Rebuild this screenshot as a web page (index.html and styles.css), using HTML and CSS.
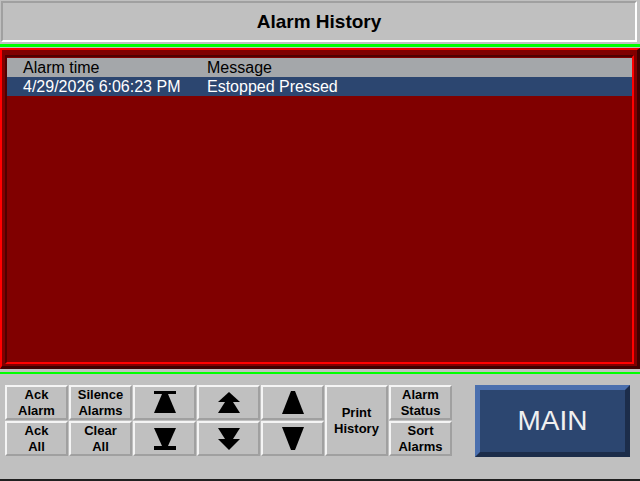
FILE: index.html
```html
<!DOCTYPE html>
<html lang="en">
<head>
    <meta charset="UTF-8">
    <title>Alarm History</title>
    <link rel="stylesheet" href="styles.css">
</head>
<body>
<div class="title">Alarm History</div>
<div class="line top"></div>
<div class="panel">
    <div class="well">
        <table class="alarms">
            <thead>
            <tr><th class="time">Alarm time</th><th>Message</th></tr>
            </thead>
            <tbody>
            <tr class="sel"><td>4/29/2026 6:06:23 PM</td><td>Estopped Pressed</td></tr>
            </tbody>
        </table>
    </div>
</div>
<div class="line bottom"></div>
<div class="controls">
    <div class="keys">
        <div class="key">Ack<br>Alarm</div>
        <div class="key">Silence<br>Alarms</div>
        <div class="key">
            <svg width="22" height="23" viewBox="0 0 22 23"><rect x="0" y="0" width="22" height="3"/><polygon points="8,3 14,3 22,22 0,22"/></svg>
        </div>
        <div class="key">
            <svg width="22" height="22" viewBox="0 0 22 22"><polygon points="11,0 22,10 0,10"/><polygon points="7,10 15,10 22,21 0,21"/></svg>
        </div>
        <div class="key">
            <svg width="22" height="23" viewBox="0 0 22 23"><polygon points="9,0 13,0 22,23 0,23"/></svg>
        </div>
        <div class="key print">Print<br>History</div>
        <div class="key">Alarm<br>Status</div>
        <div class="key">Ack<br>All</div>
        <div class="key">Clear<br>All</div>
        <div class="key">
            <svg width="22" height="22" viewBox="0 0 22 22"><polygon points="0,0 22,0 14,18 8,18"/><rect x="0" y="18" width="22" height="4"/></svg>
        </div>
        <div class="key">
            <svg width="22" height="22" viewBox="0 0 22 22"><polygon points="0,0 22,0 15,11 7,11"/><polygon points="0,11 22,11 11,22"/></svg>
        </div>
        <div class="key">
            <svg width="22" height="23" viewBox="0 0 22 23"><polygon points="0,0 22,0 13,23 9,23"/></svg>
        </div>
        <div class="key">Sort<br>Alarms</div>
    </div>
    <div class="main">MAIN</div>
</div>
<div class="foot"></div>
</body>
</html>
```

FILE: styles.css
```css
*{
    margin: 0;
    padding: 0;
    box-sizing: border-box;
}
html,body{
    width: 640px;
    height: 481px;
    overflow: hidden;
}
body{
    background-color: #c0c0c0;
    font-family: "Liberation Sans", Arial, sans-serif;
    color: #000;
}
.title{
    margin: 1px 3px 0 1px;
    height: 41px;
    border: 2px solid;
    border-color: #a0a0a0 #ffffff #ffffff #a0a0a0;
    font-size: 19px;
    font-weight: bold;
    line-height: 37px;
    text-align: center;
}
.line{
    background-color: #00ff00;
}
.line.top{
    height: 3px;
    margin-top: 2px;
}
.line.bottom{
    height: 2px;
    margin-top: 3px;
}
.panel{
    margin-top: 1px;
    height: 321px;
    border-style: solid;
    border-width: 2px 3px 3px 2px;
    border-color: #ff0000 #400000 #400000 #ff0000;
    background-color: #800000;
    padding: 5px 3px 2px 3px;
}
.well{
    height: 100%;
    border: 2px solid;
    border-color: #500000 #ff0000 #ff0000 #500000;
    padding-top: 1px;
}
.alarms{
    width: 100%;
    border-collapse: collapse;
    table-layout: fixed;
    font-size: 16px;
}
.alarms th,.alarms td{
    text-align: left;
    font-weight: normal;
    padding: 0 0 0 16px;
    white-space: nowrap;
}
.alarms .time{
    width: 184px;
}
.alarms thead tr{
    height: 19px;
    background-color: #a4a7aa;
}
.alarms .sel{
    height: 19px;
    background-color: #2c4670;
    color: #ffffff;
}
.controls{
    height: 105px;
    padding: 11px 0 0 5px;
    display: flex;
    align-items: flex-start;
}
.keys{
    display: grid;
    grid-template-columns: repeat(7, 63px);
    grid-template-rows: 35px 35px;
    gap: 1px;
}
.key{
    border: 2px solid;
    border-color: #f4f4f4 #a0a0a0 #a0a0a0 #f4f4f4;
    display: flex;
    align-items: center;
    justify-content: center;
    text-align: center;
    font-size: 13px;
    font-weight: bold;
    line-height: 16px;
}
.key.print{
    grid-column: 6;
    grid-row: 1 / span 2;
}
.main{
    margin-left: 23px;
    width: 155px;
    height: 72px;
    border: 5px solid;
    border-color: #4a6fae #1c2d4a #1c2d4a #4a6fae;
    background-color: #2c4670;
    color: #f0f0f0;
    font-size: 28px;
    display: flex;
    align-items: center;
    justify-content: center;
}
.foot{
    height: 2px;
    background-color: #202020;
}
```
